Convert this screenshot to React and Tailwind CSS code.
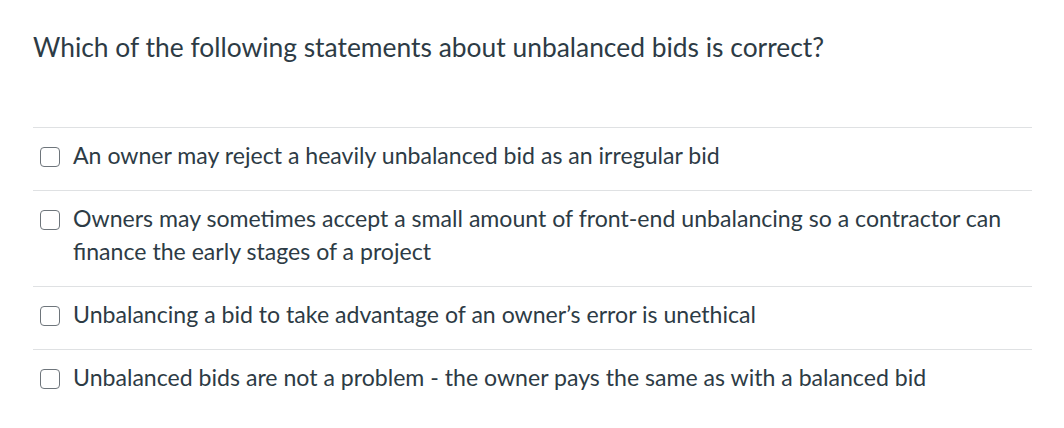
import { useState } from 'react';

const options = [
  'An owner may reject a heavily unbalanced bid as an irregular bid',
  'Owners may sometimes accept a small amount of front-end unbalancing so a contractor can finance the early stages of a project',
  'Unbalancing a bid to take advantage of an owner\u2019s error is unethical',
  'Unbalanced bids are not a problem - the owner pays the same as with a balanced bid',
];

export default function App() {
  const [checked, setChecked] = useState([]);

  const toggle = (i) => {
    setChecked(prev => prev.includes(i) ? prev.filter(x => x !== i) : [...prev, i]);
  };

  return (
    <div className="min-h-screen bg-white text-[#2d3b45] font-['Lato',sans-serif]">
      <div className="pl-[33px] pr-[33px] pt-[31px]">
        <h2 className="text-[26.4px] leading-[32px]">
          Which of the following statements about unbalanced bids is correct?
        </h2>

        <div className="mt-[64px] w-[999px] border-t border-[#dfe1e3] divide-y divide-[#dfe1e3]">
          {options.map((text, i) => (
            <label
              key={i}
              className="flex items-start gap-[13px] pl-[7px] pr-4 pt-[11px] pb-[18px] cursor-pointer"
            >
              <span className="mt-[8px] flex-none w-[20px] h-[20px] rounded-[4px] border border-[#6e757b] bg-white flex items-center justify-center">
                <input
                  type="checkbox"
                  checked={checked.includes(i)}
                  onChange={() => toggle(i)}
                  className="sr-only"
                />
                {checked.includes(i) && (
                  <svg viewBox="0 0 16 16" className="w-3 h-3" fill="none" stroke="#2d3b45" strokeWidth="2.5">
                    <path d="M3 8.5l3 3 7-7" />
                  </svg>
                )}
              </span>
              <span className="text-[23.1px] leading-[33px]">{text}</span>
            </label>
          ))}
        </div>
      </div>
    </div>
  );
}
